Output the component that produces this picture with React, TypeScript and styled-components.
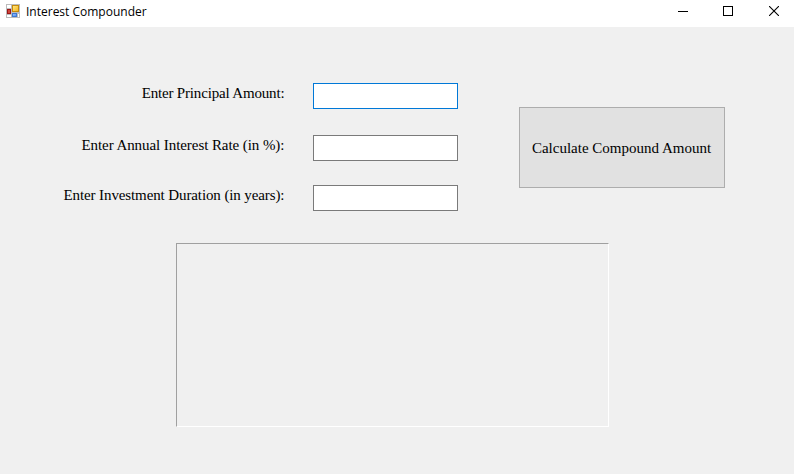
import React from "react";
import styled, { createGlobalStyle } from "styled-components";

const GlobalStyle = createGlobalStyle`
  * { box-sizing: border-box; }
  html, body { margin: 0; padding: 0; overflow: hidden; background: #f0f0f0; }
`;

const Window = styled.div`
  width: 794px;
  height: 474px;
  display: flex;
  flex-direction: column;
  background: #f0f0f0;
  color: #000;
`;

const TitleBar = styled.header`
  height: 27px;
  flex: none;
  display: flex;
  align-items: flex-start;
  background: #fff;
  padding-left: 6px;
`;

const AppIcon = styled.svg`
  display: block;
  margin: 4px 6px 0 0;
`;

const Title = styled.h1`
  margin: 0;
  flex: 1;
  font: 400 12px/23px "Open Sans", "Noto Sans", sans-serif;
  letter-spacing: 0;
  white-space: nowrap;
`;

const WindowControls = styled.div`
  display: flex;
`;

const ControlButton = styled.button<{ $width: number; $inset?: number }>`
  width: ${({ $width }) => $width}px;
  height: 22px;
  padding: 0 0 0 ${({ $inset = 0 }) => $inset}px;
  border: 0;
  background: transparent;
  display: flex;
  align-items: center;
  justify-content: center;
`;

const Client = styled.main`
  flex: 1;
  display: flex;
  flex-direction: column;
  font: 15px/18px "Liberation Serif", "Times New Roman", serif;
`;

const TopArea = styled.div`
  display: flex;
  align-items: flex-start;
  padding-top: 56px;
`;

const Fields = styled.form`
  width: 458px;
  display: flex;
  flex-direction: column;
`;

const FieldRow = styled.div<{ $gap: number }>`
  display: flex;
  justify-content: flex-end;
  height: 26px;
  margin-bottom: ${({ $gap }) => $gap}px;
`;

const Label = styled.label<{ $spacing: number }>`
  margin-right: 28.6px;
  padding-top: 1px;
  letter-spacing: ${({ $spacing }) => $spacing}px;
  white-space: nowrap;
`;

const TextBox = styled.input<{ $active?: boolean }>`
  width: 145px;
  height: 26px;
  padding: 2px 4px;
  border: 1px solid ${({ $active }) => ($active ? "#0078d7" : "#7a7a7a")};
  border-radius: 0;
  background: #fff;
  font: inherit;
  outline: none;
`;

const CalculateButton = styled.button`
  width: 206px;
  height: 81px;
  margin: 24px 0 0 61px;
  padding: 0 1px 0 0;
  border: 1px solid #adadad;
  background: #e1e1e1;
  color: #000;
  font: inherit;
  white-space: nowrap;
`;

const ResultPanel = styled.output`
  display: block;
  width: 433px;
  height: 184px;
  margin: 32px 0 0 176px;
  border: 1px solid;
  border-color: #a0a0a0 #fff #fff #a0a0a0;
`;

const fields = [
  { id: "principal", label: "Enter Principal Amount:", gap: 26, spacing: -0.17, active: true },
  { id: "rate", label: "Enter Annual Interest Rate (in %):", gap: 24, spacing: -0.07 },
  { id: "duration", label: "Enter Investment Duration (in years):", gap: 0, spacing: -0.11 },
];

const FormIcon = () => (
  <AppIcon width="14" height="14" viewBox="0 0 14 14" shapeRendering="crispEdges">
    <defs>
      <linearGradient id="gold" x1="0" y1="0" x2="1" y2="1">
        <stop offset="0" stopColor="#ffe680" />
        <stop offset="1" stopColor="#f5b820" />
      </linearGradient>
      <linearGradient id="blue" x1="0" y1="0" x2="1" y2="1">
        <stop offset="0" stopColor="#8fbcff" />
        <stop offset="1" stopColor="#5a94f0" />
      </linearGradient>
    </defs>
    <rect width="14" height="14" fill="#bcbcbc" />
    <path d="M1 1h4v3H1zM1 11h4v2H1zM12 10h1v3h-1z" fill="#fff" />
    <rect x="6" y="1" width="7" height="7" fill="#c58a0c" />
    <rect x="7" y="2" width="5" height="5" fill="url(#gold)" />
    <rect x="1" y="5" width="4" height="5" fill="#9c1717" />
    <rect x="2" y="6" width="2" height="3" fill="#d0453c" />
    <rect x="6" y="9" width="5" height="4" fill="#3f78d0" />
    <rect x="7" y="10" width="3" height="2" fill="url(#blue)" />
  </AppIcon>
);

export default function App() {
  return (
    <>
      <GlobalStyle />
      <Window>
        <TitleBar>
          <FormIcon />
          <Title>Interest Compounder</Title>
          <WindowControls>
            <ControlButton $width={46} aria-label="Minimize">
              <svg width="10" height="10" shapeRendering="crispEdges">
                <path d="M0 5h10v1H0z" />
              </svg>
            </ControlButton>
            <ControlButton $width={44} aria-label="Maximize">
              <svg width="10" height="10" shapeRendering="crispEdges">
                <path d="M.5 .5h9v9h-9z" fill="none" stroke="#000" />
              </svg>
            </ControlButton>
            <ControlButton $width={44} $inset={4} aria-label="Close">
              <svg width="10" height="10">
                <path d="M0 0l10 10M10 0L0 10" fill="none" stroke="#000" strokeWidth="1.1" />
              </svg>
            </ControlButton>
          </WindowControls>
        </TitleBar>
        <Client>
          <TopArea>
            <Fields>
              {fields.map((f) => (
                <FieldRow key={f.id} $gap={f.gap}>
                  <Label htmlFor={f.id} $spacing={f.spacing}>{f.label}</Label>
                  <TextBox id={f.id} $active={f.active} />
                </FieldRow>
              ))}
            </Fields>
            <CalculateButton type="button">Calculate Compound Amount</CalculateButton>
          </TopArea>
          <ResultPanel />
        </Client>
      </Window>
    </>
  );
}
